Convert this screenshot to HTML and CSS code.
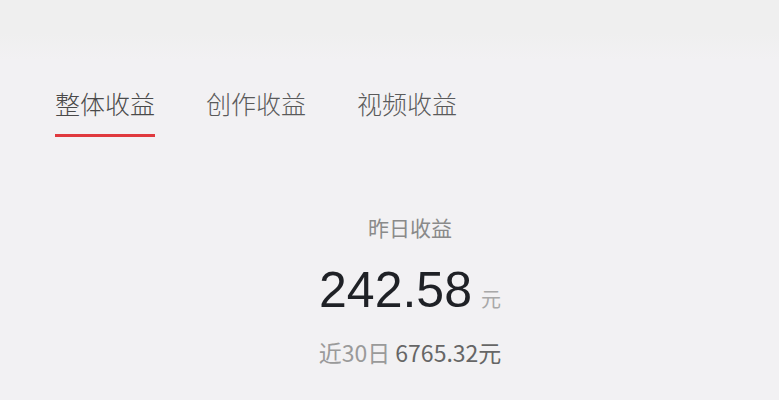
FILE: index.html
```html
<!DOCTYPE html>
<html lang="zh-CN">
<head>
<meta charset="utf-8">
<title>收益</title>
<link rel="stylesheet" href="styles.css">
</head>
<body>
<div class="page">
  <div class="topband"></div>
  <nav class="tabs">
    <div class="tab active">整体收益</div>
    <div class="tab">创作收益</div>
    <div class="tab">视频收益</div>
  </nav>
  <section class="stats">
    <div class="label">昨日收益</div>
    <div class="amount"><span class="num">242.58</span><span class="unit">元</span></div>
    <div class="recent"><span class="recent-label">近30日</span> <span class="recent-value">6765.32元</span></div>
  </section>
</div>
</body>
</html>
```
FILE: styles.css
```css
html, body {
  margin: 0;
  padding: 0;
}
body {
  background: #f2f1f3;
  font-family: "Liberation Sans", "Noto Sans CJK SC", sans-serif;
  width: 779px;
  height: 400px;
  overflow: hidden;
}
.page {
  display: flex;
  flex-direction: column;
}
.topband {
  height: 60px;
  background: linear-gradient(#efefef, #efefef 55%, #f2f1f3);
}
.tabs {
  display: flex;
  gap: 51px;
  padding-left: 55px;
  margin-top: 29px;
}
.tab {
  font-size: 25px;
  line-height: 28px;
  color: #5a5a5a;
  padding-bottom: 17px;
  border-bottom: 3px solid transparent;
  font-family: "Noto Sans CJK SC", sans-serif;
  font-weight: 300;
}
.tab.active {
  color: #4a4a4a;
  border-bottom-color: #e0393e;
}
.stats {
  display: flex;
  flex-direction: column;
  align-items: center;
  padding-left: 41px;
  margin-top: 78px;
}
.label {
  font-family: "Noto Sans CJK SC", sans-serif;
  font-size: 21px;
  line-height: 24px;
  color: #8a8a8a;
}
.amount {
  display: flex;
  align-items: baseline;
  margin-top: 26px;
}
.num {
  font-size: 50px;
  line-height: 50px;
  color: #1f2126;
}
.unit {
  font-family: "Noto Sans CJK SC", sans-serif;
  font-size: 20px;
  color: #a8a8a8;
  margin-left: 9px;
}
.recent {
  font-size: 23px;
  line-height: 26px;
  margin-top: 24px;
  font-family: "Noto Sans CJK SC", sans-serif;
}
.recent-label {
  color: #9a9a9a;
}
.recent-value {
  color: #666;
}
```
